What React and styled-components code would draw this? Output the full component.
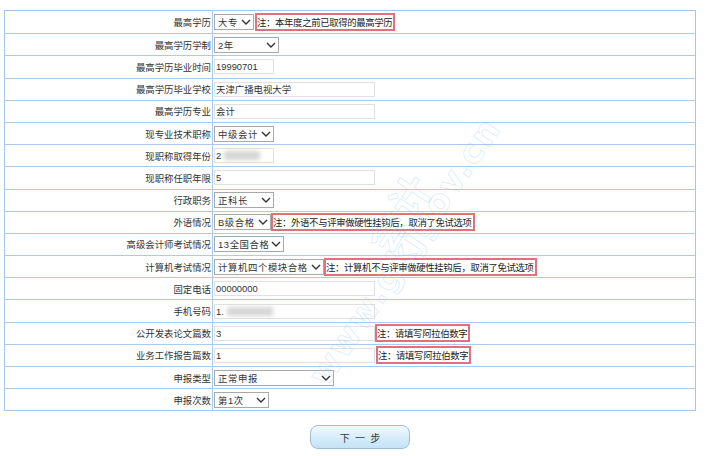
import React from 'react'
import styled, { createGlobalStyle } from 'styled-components'

const GlobalStyle = createGlobalStyle`
    body {
        margin: 0;
        background: #fff;
        font-family: "Liberation Sans", "Noto Sans CJK SC", sans-serif;
        font-size: 9.4px;
        color: #333;
    }
`

const Page = styled.div`
    position: relative;
    width: 692px;
    padding: 10px 0 0 4px;
`

const Table = styled.div`
    border: 1px solid #a3c6ea;
`

const Row = styled.div`
    display: grid;
    grid-template-columns: 208px 1fr;
    height: 22.2px;
    box-sizing: border-box;
    border-top: ${props => props.first ? 'none' : '1px solid #a8cbee'};
`

const Label = styled.div`
    display: flex;
    align-items: center;
    justify-content: flex-end;
    padding-right: 1px;
    border-right: 1px solid #a8cbee;
    color: #333;
    white-space: nowrap;
`

const Value = styled.div`
    display: flex;
    align-items: center;
    padding-left: 1px;
    white-space: nowrap;
`

const SelectBox = styled.div`
    box-sizing: border-box;
    width: ${props => props.w}px;
    height: 16px;
    border: 1px solid #a9a9a9;
    background: #fff;
    display: flex;
    align-items: center;
    justify-content: space-between;
    padding: 0 2px 0 3px;
    color: #333;
    letter-spacing: 0.6px;
`

const TextBox = styled.div`
    box-sizing: border-box;
    width: ${props => props.w}px;
    height: 15px;
    border: 1px solid #e0e0e0;
    display: flex;
    align-items: center;
    padding-left: 1px;
    color: #333;
`

const Blur = styled.span`
    display: inline-block;
    width: ${props => props.w}px;
    height: 9px;
    margin-left: 3px;
    background: #d6d6d6;
    filter: blur(2px);
`

const Note = styled.div`
    box-sizing: border-box;
    height: 18px;
    margin-left: ${props => props.gap || 0}px;
    padding: 0 1px 0 0;
    border: 2px solid #e0707c;
    display: flex;
    align-items: center;
    color: #222;
    letter-spacing: -0.35px;
`

const Footer = styled.div`
    display: flex;
    padding: 14px 0 0 306px;
`

const Button = styled.button`
    width: 100px;
    height: 24px;
    border: 1px solid #9dbcd8;
    border-radius: 8px;
    background: linear-gradient(#f2f9fe, #d6ecfa 55%, #c4e2f6);
    font-family: "Noto Sans CJK SC", sans-serif;
    font-size: 10px;
    color: #2e3b48;
    word-spacing: 3px;
    padding: 0;
`

const Watermark = styled.div`
    position: absolute;
    left: ${props => props.x}px;
    top: ${props => props.y}px;
    transform: rotate(${props => props.r}deg);
    transform-origin: left top;
    font-family: "DejaVu Sans", "Noto Sans CJK SC", sans-serif;
    font-size: ${props => props.size}px;
    font-weight: bold;
    color: transparent;
    -webkit-text-stroke: 1px rgba(150, 192, 235, 0.3);
    letter-spacing: 2px;
    white-space: nowrap;
    pointer-events: none;
`

const Chevron = () => (
    <svg width="10" height="6" viewBox="0 0 10 6">
        <polyline points="1,1 5,5 9,1" fill="none" stroke="#333" strokeWidth="1.4" />
    </svg>
)

const Select = ({ w, children }) => (
    <SelectBox w={w}>
        <span>{children}</span>
        <Chevron />
    </SelectBox>
)

const rows = [
    ['最高学历', <><Select w={40}>大专</Select><Note gap={1}>注：本年度之前已取得的最高学历</Note></>],
    ['最高学历学制', <Select w={65}>2年</Select>],
    ['最高学历毕业时间', <TextBox w={60}>19990701</TextBox>],
    ['最高学历毕业学校', <TextBox w={161}>天津广播电视大学</TextBox>],
    ['最高学历专业', <TextBox w={161}>会计</TextBox>],
    ['现专业技术职称', <Select w={60}>中级会计</Select>],
    ['现职称取得年份', <TextBox w={60}>2<Blur w={36} /></TextBox>],
    ['现职称任职年限', <TextBox w={161}>5</TextBox>],
    ['行政职务', <Select w={60}>正科长</Select>],
    ['外语情况', <><Select w={57}>B级合格</Select><Note>注：外语不与评审做硬性挂钩后，取消了免试选项</Note></>],
    ['高级会计师考试情况', <Select w={70}>13全国合格</Select>],
    ['计算机考试情况', <><Select w={110}>计算机四个模块合格</Select><Note>注：计算机不与评审做硬性挂钩后，取消了免试选项</Note></>],
    ['固定电话', <TextBox w={161}>00000000</TextBox>],
    ['手机号码', <TextBox w={161}>1.<Blur w={46} /></TextBox>],
    ['公开发表论文篇数', <><TextBox w={161}>3</TextBox><Note>注：请填写阿拉伯数字</Note></>],
    ['业务工作报告篇数', <><TextBox w={161}>1</TextBox><Note gap={1}>注：请填写阿拉伯数字</Note></>],
    ['申报类型', <Select w={120}>正常申报</Select>],
    ['申报次数', <Select w={55}>第1次</Select>],
]

export default function App() {
    return (
        <>
            <GlobalStyle />
            <Page>
                <Table>
                    {rows.map(([label, value], i) => (
                        <Row key={label} first={i === 0}>
                            <Label>{label}</Label>
                            <Value>{value}</Value>
                        </Row>
                    ))}
                </Table>
                <Footer>
                    <Button>下 一 步</Button>
                </Footer>
                <Watermark x={300} y={370} r={-56} size={34}>www.gkjgov.cn</Watermark>
                <Watermark x={350} y={230} r={-56} size={40}>会计</Watermark>
            </Page>
        </>
    )
}
